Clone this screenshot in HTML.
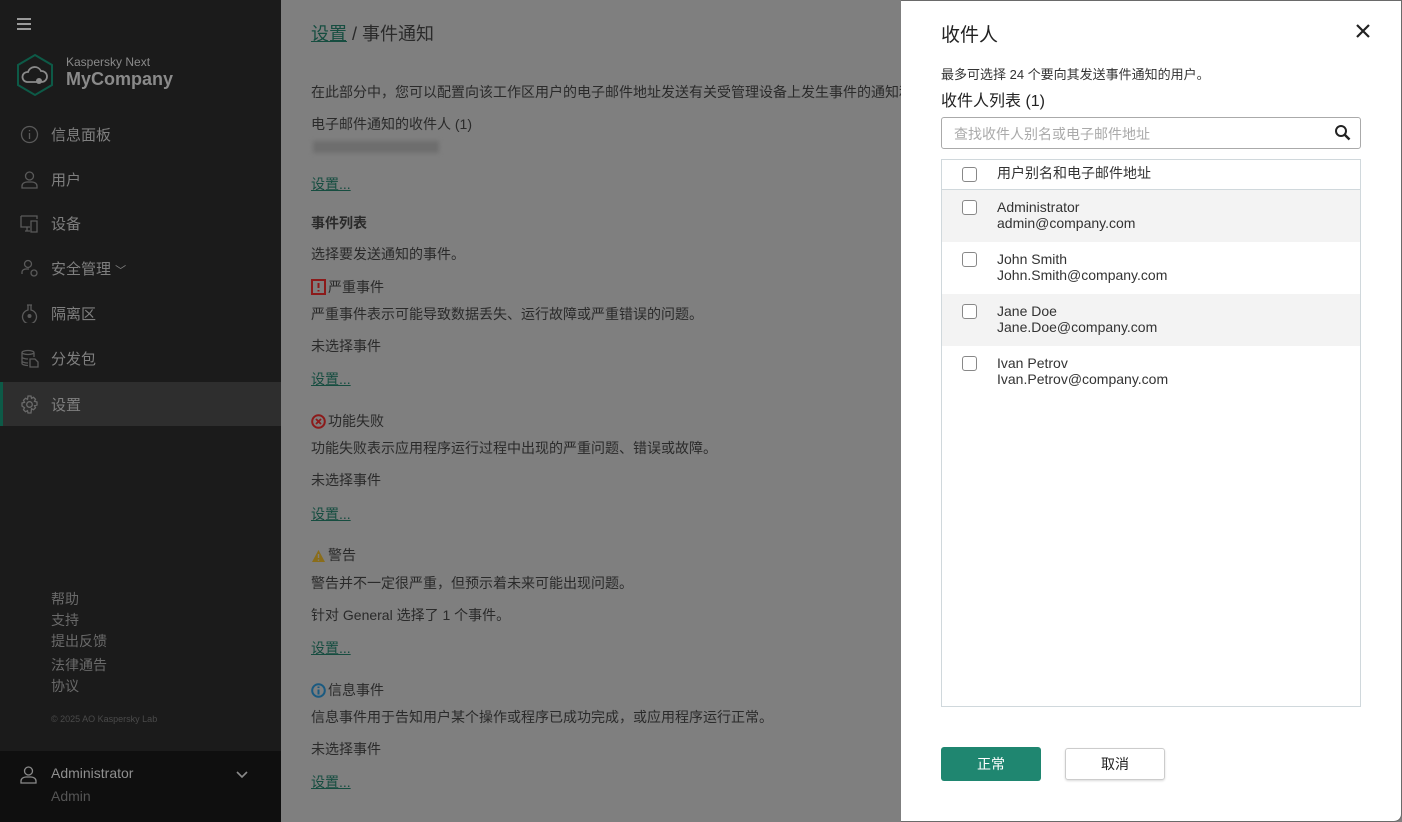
<!DOCTYPE html>
<html><head><meta charset="utf-8"><style>
*{box-sizing:border-box;margin:0;padding:0}
body{width:1402px;height:822px;overflow:hidden;font-family:"Liberation Sans","Noto Sans CJK SC",sans-serif;position:relative;background:#7f7f7f}
.sb{position:absolute;left:0;top:0;width:281px;height:822px;background:#1b1b1b;color:#7a7a7a}
.nav{position:absolute;left:0;width:281px;height:44px;font-size:15px;color:#7f7f7f;display:flex;align-items:center}
.nav svg{position:absolute;left:20px}
.nav span{position:absolute;left:51px}
.main{position:absolute;left:281px;top:0;width:620px;height:822px;background:#7f7f7f;color:#2a2a2a;font-size:14px}
.main .t{position:absolute;left:30px;white-space:nowrap}
.lk{color:#164d40;text-decoration:underline}
.ic{display:inline-block;vertical-align:-3px;margin-right:2px}
.dlg{position:absolute;left:901px;top:0;width:501px;height:822px;background:#fff;border:1px solid #6a6a6a;border-left:none;border-radius:0 0 8px 0}
.row{position:absolute;left:941px;width:419px;font-size:14px;color:#333}
.cb{position:absolute;left:21px;width:15px;height:15px;border:1px solid #888;border-radius:3px;background:#fff}
.row .n{position:absolute;left:56px;line-height:16px}
</style></head><body>
<div class="sb">
 <div style="position:absolute;left:17px;top:18px;width:14px;height:2px;background:#9a9a9a;box-shadow:0 5px 0 #9a9a9a,0 10px 0 #9a9a9a"></div>
 <svg style="position:absolute;left:15px;top:53px" width="40" height="44" viewBox="0 0 40 44"><polygon points="20,2 37,12 37,32 20,42 3,32 3,12" fill="none" stroke="#0d5a47" stroke-width="2"/><path d="M12 29a5 5 0 0 1 1-10a7 7 0 0 1 13-1a5.5 5.5 0 0 1 1 11z" fill="none" stroke="#8a8a8a" stroke-width="1.8"/><circle cx="24" cy="28" r="3" fill="#8a8a8a"/></svg>
 <div style="position:absolute;left:66px;top:55px;font-size:12px;color:#8a8a8a">Kaspersky Next</div>
 <div style="position:absolute;left:66px;top:69px;font-size:18px;font-weight:bold;color:#8a8a8a">MyCompany</div>
 <div class="nav" style="top:112px"><svg width="19" height="19" viewBox="0 0 19 19"><circle cx="9.5" cy="9.5" r="8" fill="none" stroke="#5a5a5a" stroke-width="1.3"/><path d="M9.5 8v6M9.5 5v1.3" stroke="#5a5a5a" stroke-width="1.3"/></svg><span>信息面板</span></div>
 <div class="nav" style="top:157px"><svg width="19" height="19" viewBox="0 0 19 19"><circle cx="9.5" cy="6" r="4" fill="none" stroke="#5a5a5a" stroke-width="1.3"/><path d="M2 18v-2a5 4 0 0 1 5-4h5a5 4 0 0 1 5 4v2z" fill="none" stroke="#5a5a5a" stroke-width="1.3"/></svg><span>用户</span></div>
 <div class="nav" style="top:201px"><svg width="19" height="19" viewBox="0 0 19 19"><path d="M1 2h16v3M1 2v11h9M5 17h5M7 13v4M11 7h6v11h-6z" fill="none" stroke="#5a5a5a" stroke-width="1.3"/></svg><span>设备</span></div>
 <div class="nav" style="top:246px"><svg width="19" height="19" viewBox="0 0 19 19"><circle cx="8" cy="5" r="3.5" fill="none" stroke="#5a5a5a" stroke-width="1.3"/><path d="M2 15v-2a4 3 0 0 1 4-3h3" fill="none" stroke="#5a5a5a" stroke-width="1.3"/><circle cx="14" cy="14" r="3" fill="none" stroke="#5a5a5a" stroke-width="1.3"/></svg><span>安全管理 <span style="position:static;font-size:11px">﹀</span></span></div>
 <div class="nav" style="top:291px"><svg width="19" height="19" viewBox="0 0 19 19"><path d="M7 1h5M8 1v5a7 7 0 1 0 3 0V1" fill="none" stroke="#5a5a5a" stroke-width="1.3"/><circle cx="9.5" cy="12" r="2" fill="#5a5a5a"/></svg><span>隔离区</span></div>
 <div class="nav" style="top:336px"><svg width="19" height="19" viewBox="0 0 19 19"><ellipse cx="8" cy="3.5" rx="6" ry="2" fill="none" stroke="#5a5a5a" stroke-width="1.3"/><path d="M2 3.5v11c0 1 3 2 6 2M2 8c0 1 3 2 6 2M2 12c0 1 3 2 6 2M14 4v4M10 10h5l3 3v5h-8z" fill="none" stroke="#5a5a5a" stroke-width="1.3"/></svg><span>分发包</span></div>
 <div class="nav" style="top:382px;background:#2e2e2e;border-left:3px solid #0d5a47"><svg style="left:17px" width="19" height="19" viewBox="0 0 19 19"><circle cx="9.5" cy="9.5" r="2.8" fill="none" stroke="#6a6a6a" stroke-width="1.3"/><path d="M8 1h3l.5 2.3 2-1 2 2-1 2 2.5.7v3l-2.5.7 1 2-2 2-2-1L11 18H8l-.5-2.3-2 1-2-2 1-2L2 11V8l2.5-.7-1-2 2-2 2 1z" fill="none" stroke="#6a6a6a" stroke-width="1.3"/></svg><span style="left:48px">设置</span></div>
 <div style="position:absolute;left:51px;top:589px;font-size:14px;line-height:21px;color:#6a6a6a">帮助<br>支持<br>提出反馈</div>
 <div style="position:absolute;left:51px;top:655px;font-size:14px;line-height:21px;color:#6a6a6a">法律通告<br>协议</div>
 <div style="position:absolute;left:51px;top:714px;font-size:9px;color:#4a4a4a">© 2025 AO Kaspersky Lab</div>
 <div style="position:absolute;left:0;top:751px;width:281px;height:71px;background:#0f0f0f">
  <svg style="position:absolute;left:19px;top:14px" width="19" height="19" viewBox="0 0 19 19"><circle cx="9.5" cy="6" r="4" fill="none" stroke="#8a8a8a" stroke-width="1.3"/><path d="M2 18v-2a5 4 0 0 1 5-4h5a5 4 0 0 1 5 4v2z" fill="none" stroke="#8a8a8a" stroke-width="1.3"/></svg>
  <div style="position:absolute;left:51px;top:14px;font-size:14px;color:#8f8f8f">Administrator</div>
  <div style="position:absolute;left:51px;top:37px;font-size:14px;color:#555">Admin</div>
  <svg style="position:absolute;left:236px;top:20px" width="12" height="8" viewBox="0 0 12 8"><path d="M1 1l5 5 5-5" fill="none" stroke="#8a8a8a" stroke-width="1.6"/></svg>
 </div>
</div>
<div class="main">
 <div class="t" style="top:20px;font-size:18px"><span class="lk">设置</span> / 事件通知</div>
 <div class="t" style="top:82px">在此部分中，您可以配置向该工作区用户的电子邮件地址发送有关受管理设备上发生事件的通知和</div>
 <div class="t" style="top:114px">电子邮件通知的收件人 (1)</div>
 <div class="t" style="top:141px;width:126px;height:12px;background:#6e6e6e;filter:blur(2px);left:32px"></div>
 <div class="t lk" style="top:174px">设置...</div>
 <div class="t" style="top:213px;font-weight:bold">事件列表</div>
 <div class="t" style="top:244px">选择要发送通知的事件。</div>
 <div class="t" style="top:277px"><svg class="ic" width="15" height="16" viewBox="0 0 15 16"><rect x="1" y="1" width="13" height="14" fill="none" stroke="#8c1a1a" stroke-width="2"/><path d="M7.5 4v5M7.5 11v1.5" stroke="#8c1a1a" stroke-width="2"/></svg>严重事件</div>
 <div class="t" style="top:304px">严重事件表示可能导致数据丢失、运行故障或严重错误的问题。</div>
 <div class="t" style="top:336px">未选择事件</div>
 <div class="t lk" style="top:369px">设置...</div>
 <div class="t" style="top:411px"><svg class="ic" width="15" height="15" viewBox="0 0 15 15"><circle cx="7.5" cy="7.5" r="6.3" fill="none" stroke="#8c1a1a" stroke-width="2"/><path d="M5 5l5 5M10 5l-5 5" stroke="#8c1a1a" stroke-width="1.8"/></svg>功能失败</div>
 <div class="t" style="top:438px">功能失败表示应用程序运行过程中出现的严重问题、错误或故障。</div>
 <div class="t" style="top:470px">未选择事件</div>
 <div class="t lk" style="top:504px">设置...</div>
 <div class="t" style="top:545px"><svg class="ic" width="15" height="14" viewBox="0 0 15 14"><path d="M7.5 1l6.5 12H1z" fill="#8a6d1a"/><path d="M7.5 5v4M7.5 10.5v1.3" stroke="#7f7f7f" stroke-width="1.4"/></svg>警告</div>
 <div class="t" style="top:573px">警告并不一定很严重，但预示着未来可能出现问题。</div>
 <div class="t" style="top:605px">针对 General 选择了 1 个事件。</div>
 <div class="t lk" style="top:638px">设置...</div>
 <div class="t" style="top:680px"><svg class="ic" width="15" height="15" viewBox="0 0 15 15"><circle cx="7.5" cy="7.5" r="6.3" fill="none" stroke="#1a5a80" stroke-width="2"/><path d="M7.5 6.5v5M7.5 3.5v1.5" stroke="#1a5a80" stroke-width="2"/></svg>信息事件</div>
 <div class="t" style="top:707px">信息事件用于告知用户某个操作或程序已成功完成，或应用程序运行正常。</div>
 <div class="t" style="top:739px">未选择事件</div>
 <div class="t lk" style="top:772px">设置...</div>
</div>
<div class="dlg"></div>
<div style="position:absolute;left:941px;top:20px;font-size:19px;color:#222">收件人</div>
<svg style="position:absolute;left:1356px;top:24px" width="14" height="14" viewBox="0 0 14 14"><path d="M1 1l12 12M13 1L1 13" stroke="#222" stroke-width="2.2"/></svg>
<div style="position:absolute;left:941px;top:64px;font-size:13px;color:#333">最多可选择 24 个要向其发送事件通知的用户。</div>
<div style="position:absolute;left:941px;top:87px;font-size:16px;color:#222">收件人列表 (1)</div>
<div style="position:absolute;left:941px;top:117px;width:420px;height:32px;border:1px solid #aaa;border-radius:3px;font-size:14px;color:#aaa;padding:6px 12px">查找收件人别名或电子邮件地址</div>
<svg style="position:absolute;left:1334px;top:124px" width="17" height="17" viewBox="0 0 17 17"><circle cx="7" cy="7" r="5" fill="none" stroke="#222" stroke-width="2"/><path d="M10.5 10.5l5 5" stroke="#222" stroke-width="2.5"/></svg>
<div style="position:absolute;left:941px;top:159px;width:420px;height:548px;border:1px solid #d0d8dc"></div>
<div class="row" style="top:160px;height:30px;border-bottom:1px solid #d0d8dc"><div class="cb" style="top:7px"></div><div class="n" style="top:5px;font-size:14px">用户别名和电子邮件地址</div></div>
<div class="row" style="top:190px;height:52px;background:#f3f3f3;left:942px;width:418px"><div class="cb" style="top:10px;left:20px"></div><div class="n" style="top:9px;left:55px">Administrator<br>admin@company.com</div></div>
<div class="row" style="top:242px;height:52px"><div class="cb" style="top:10px"></div><div class="n" style="top:9px">John Smith<br>John.Smith@company.com</div></div>
<div class="row" style="top:294px;height:52px;background:#f3f3f3;left:942px;width:418px"><div class="cb" style="top:10px;left:20px"></div><div class="n" style="top:9px;left:55px">Jane Doe<br>Jane.Doe@company.com</div></div>
<div class="row" style="top:346px;height:52px"><div class="cb" style="top:10px"></div><div class="n" style="top:9px">Ivan Petrov<br>Ivan.Petrov@company.com</div></div>
<div style="position:absolute;left:941px;top:747px;width:100px;height:34px;background:#1f8670;border-radius:3px;color:#fff;font-size:14px;text-align:center;line-height:34px">正常</div>
<div style="position:absolute;left:1065px;top:748px;width:100px;height:32px;border:1px solid #ccc;border-radius:3px;box-shadow:0 1px 2px rgba(0,0,0,.15);color:#222;font-size:14px;text-align:center;line-height:30px">取消</div>
</body></html>
